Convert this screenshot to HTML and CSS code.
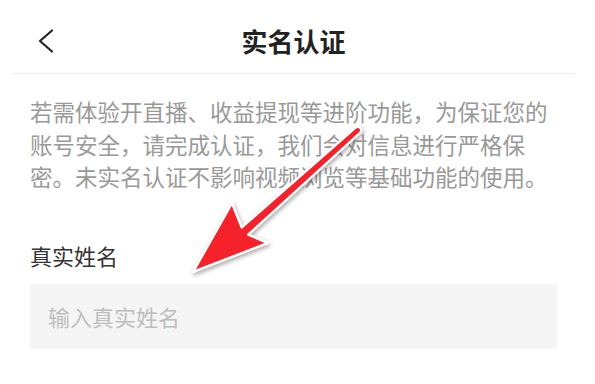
FILE: index.html
```html
<!DOCTYPE html>
<html lang="zh-CN">
<head>
<meta charset="utf-8">
<title>实名认证</title>
<link rel="stylesheet" href="styles.css">
</head>
<body>
<div class="page">
  <header class="topbar">
    <div class="back">
      <svg width="16" height="24" viewBox="0 0 16 24"><polyline points="14,1.5 2,12 14,22.5" fill="none" stroke="#222" stroke-width="2.2" stroke-linecap="round" stroke-linejoin="round"/></svg>
    </div>
    <h1 class="title">实名认证</h1>
    <div class="spacer"></div>
  </header>
  <main class="content">
    <p class="notice">若需体验开直播、收益提现等进阶功能，为保证您的账号安全，请完成认证，我们会对信息进行严格保密。未实名认证不影响视频浏览等基础功能的使用。</p>
    <label class="label" for="realname">真实姓名</label>
    <input class="field" id="realname" type="text" placeholder="输入真实姓名">
  </main>
  <svg class="arrow" width="595" height="384" viewBox="0 0 595 384">
    <path d="M193,272 L232,203 L241.7,227.3 L355.7,127.4 A3.5,3.5 0 0 1 360.3,132.6 L248.3,234.7 L268,243 Z" fill="#f5222b" stroke="#fff" stroke-width="2.5" stroke-linejoin="round"/>
  </svg>
</div>
</body>
</html>
```
FILE: styles.css
```css
html, body {
  margin: 0;
  padding: 0;
  background: #fff;
}
body {
  font-family: "Noto Sans CJK SC", "Noto Sans", sans-serif;
}
.page {
  position: relative;
  width: 595px;
  height: 384px;
  overflow: hidden;
}
.topbar {
  display: grid;
  grid-template-columns: 1fr auto 1fr;
  align-items: center;
  height: 74px;
  box-sizing: border-box;
  padding-top: 9px;
  margin: 0 20px 0 12px;
  border-bottom: 1px solid #eeeeee;
}
.back {
  display: flex;
  align-items: center;
  padding-left: 26px;
}
.back svg {
  display: block;
}
.title {
  margin: 0;
  font-size: 26px;
  line-height: 32px;
  font-weight: 600;
  color: #222;
}
.content {
  margin: 0 38px 0 30px;
  display: flex;
  flex-direction: column;
}
.notice {
  margin: 21px 0 0;
  font-size: 22.5px;
  line-height: 32.5px;
  color: #999;
}
.label {
  margin-top: 47px;
  font-size: 22px;
  line-height: 30px;
  color: #333;
}
.field {
  margin-top: 14px;
  height: 65px;
  box-sizing: border-box;
  width: 100%;
  border: none;
  outline: none;
  background: #f5f5f5;
  padding: 0 18px;
  font-family: inherit;
  font-size: 22px;
  color: #333;
}
.field::placeholder {
  color: #bdbdbd;
}
.arrow {
  position: absolute;
  left: 0;
  top: 0;
  pointer-events: none;
  filter: drop-shadow(1px 2px 2px rgba(0, 0, 0, 0.35));
}
```
